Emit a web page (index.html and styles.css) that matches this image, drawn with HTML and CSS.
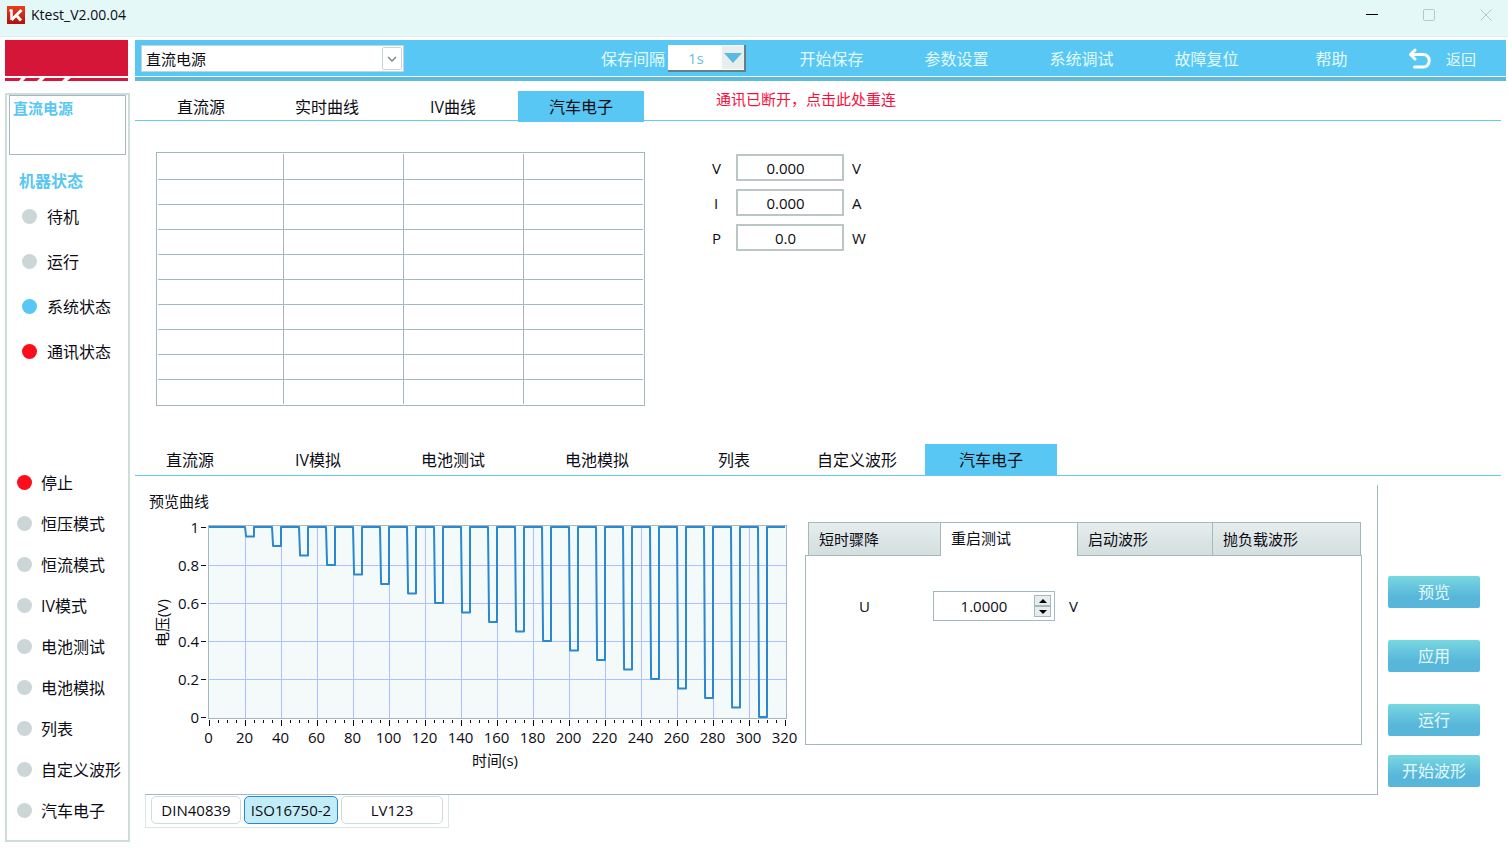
FILE: index.html
```html
<!DOCTYPE html>
<html lang="zh-CN">
<head>
    <meta charset="UTF-8">
    <meta name="viewport" content="width=device-width, initial-scale=1.0">
    <title>Ktest_V2.00.04</title>
    <link rel="stylesheet" href="styles.css">
</head>
<body>

<header class="titlebar">
    <svg class="app-icon" width="18" height="18" viewBox="0 0 18 18">
        <defs>
            <linearGradient id="icon-red" x1="0" y1="0" x2="0" y2="1">
                <stop offset="0" stop-color="#e8401c"/>
                <stop offset="1" stop-color="#b3100c"/>
            </linearGradient>
        </defs>
        <rect width="18" height="18" fill="url(#icon-red)"/>
        <path d="M4.500 3.500v10.500M2.500 4.500h2" fill="none" stroke="#fff" stroke-width="2.500"/>
        <path d="M4.500 14l10-10M9.500 9.500l4.500 5" fill="none" stroke="#fff" stroke-width="3"/>
    </svg>
    <h1>Ktest_V2.00.04</h1>
    <div class="window-buttons">
        <button aria-label="最小化"><svg width="12" height="12"><path d="M0 5.500h12" stroke="#000"/></svg></button>
        <button aria-label="最大化"><svg width="12" height="12"><rect x="0.500" y="0.500" width="11" height="11" rx="1" fill="none" stroke="#b4c8c8"/></svg></button>
        <button aria-label="关闭"><svg width="12" height="12"><path d="M0.500 0.500l11 11M11.500 0.500l-11 11" stroke="#b4c8c8"/></svg></button>
    </div>
</header>

<div class="app">
    <div class="left">
        <div class="logo">
            <svg width="123" height="6" viewBox="0 0 123 6">
                <path d="M14 6l3-4h5l-4 4zM32 6l4-4h5l-4 4zM57 6l4-4h6l-5 4z" fill="#fff"/>
            </svg>
        </div>

        <aside class="sidebar">
            <div class="device">直流电源</div>
            <h2>机器状态</h2>
            <ul class="status">
                <li><i class="dot"></i>待机</li>
                <li><i class="dot"></i>运行</li>
                <li><i class="dot blue"></i>系统状态</li>
                <li><i class="dot red"></i>通讯状态</li>
            </ul>
            <ul class="modes">
                <li><i class="dot red"></i>停止</li>
                <li><i class="dot"></i>恒压模式</li>
                <li><i class="dot"></i>恒流模式</li>
                <li><i class="dot"></i>IV模式</li>
                <li><i class="dot"></i>电池测试</li>
                <li><i class="dot"></i>电池模拟</li>
                <li><i class="dot"></i>列表</li>
                <li><i class="dot"></i>自定义波形</li>
                <li><i class="dot"></i>汽车电子</li>
            </ul>
        </aside>
    </div>

    <main>
        <div class="topbar">
            <div class="device-select">
                <select aria-label="设备">
                    <option>直流电源</option>
                </select>
                <span class="arrow"><svg width="10" height="6" viewBox="0 0 10 6"><path d="M1 1l4 4 4-4" fill="none" stroke="#6f8388" stroke-width="1.300"/></svg></span>
            </div>
            <label class="interval-label" for="interval">保存间隔</label>
            <div class="interval-select">
                <select id="interval">
                    <option>1s</option>
                </select>
                <span class="arrow"><svg width="18" height="10" viewBox="0 0 18 10"><path d="M0 0h18l-9 10z" fill="#58bce0"/></svg></span>
            </div>
            <nav>
                <button>开始保存</button>
                <button>参数设置</button>
                <button>系统调试</button>
                <button>故障复位</button>
                <button>帮助</button>
            </nav>
            <button class="back">
                <svg width="24" height="22" viewBox="0 0 24 22">
                    <path d="M7 2L2.500 6.500 7 11M3 6.500h12.500a5.500 6 0 0 1 0 12.500H6.500" fill="none" stroke="#fff" stroke-width="3" stroke-linecap="round" stroke-linejoin="round"/>
                </svg>
                返回
            </button>
        </div>

        <div class="tabs tabs-view">
            <button>直流源</button>
            <button>实时曲线</button>
            <button>IV曲线</button>
            <button class="active">汽车电子</button>
            <button class="reconnect">通讯已断开，点击此处重连</button>
        </div>

        <section class="measure">
            <div class="table-frame">
                <table id="data-table">
                    <colgroup><col class="first"><col><col><col></colgroup>
                    <tbody></tbody>
                </table>
            </div>
            <div class="readings">
                <label for="read-v">V</label><input id="read-v" value="0.000" readonly><span>V</span>
                <label for="read-i">I</label><input id="read-i" value="0.000" readonly><span>A</span>
                <label for="read-p">P</label><input id="read-p" value="0.0" readonly><span>W</span>
            </div>
        </section>

        <div class="tabs tabs-function">
            <button>直流源</button>
            <button>IV模拟</button>
            <button>电池测试</button>
            <button>电池模拟</button>
            <button>列表</button>
            <button>自定义波形</button>
            <button class="active">汽车电子</button>
        </div>

        <div class="workspace">
            <section class="panel">
                <div class="preview">
                    <h3>预览曲线</h3>
                    <svg id="chart" viewBox="0 0 660 270"></svg>
                </div>

                <div class="wave">
                    <div class="wave-tabs">
                        <button>短时骤降</button>
                        <button class="active">重启测试</button>
                        <button>启动波形</button>
                        <button>抛负载波形</button>
                    </div>
                    <div class="wave-body">
                        <label for="voltage">U</label>
                        <div class="spinner">
                            <input id="voltage" value="1.0000">
                            <div class="steps">
                                <button aria-label="增加"><svg width="8" height="4"><path d="M0 4l4-4 4 4z"/></svg></button>
                                <button aria-label="减少"><svg width="8" height="4"><path d="M0 0l4 4 4-4z"/></svg></button>
                            </div>
                        </div>
                        <span>V</span>
                    </div>
                </div>
            </section>

            <div class="actions">
                <button>预览</button>
                <button>应用</button>
                <button>运行</button>
                <button class="start">开始波形</button>
            </div>
        </div>

        <div class="standards">
            <button>DIN40839</button>
            <button class="active">ISO16750-2</button>
            <button>LV123</button>
        </div>
    </main>
</div>

<script>
    // Empty result table, 10 rows x 4 columns
    const tbody = document.querySelector('#data-table tbody');
    for (let i = 0; i < 10; i++) {
        tbody.insertAdjacentHTML('beforeend', '<tr><td></td><td></td><td></td><td></td></tr>');
    }

    // Plot area inside the chart
    const left = 64, right = 640, top1 = 16, bottom = 206;
    const px = t => left + t * (right - left) / 320;
    const py = v => bottom - v * (bottom - top1);

    function drawChart() {
        let out = `<rect class="plot" x="${left - 0.5}" y="${top1 - 1.5}" width="578" height="193"/>`;

        for (let t = 0; t <= 320; t += 5) {
            const x = Math.round(px(t)) + 0.5;
            const major = t % 20 === 0;
            if (major && t > 0 && t < 320) {
                out += `<path class="grid" d="M${x} ${top1}V${bottom + 1}"/>`;
            }
            out += `<path class="tick" d="M${x} 209v${major ? 6 : 3}"/>`;
            if (major) {
                out += `<text x="${x - 1}" y="232" text-anchor="middle">${t}</text>`;
            }
        }

        for (let i = 0; i <= 5; i++) {
            const y = Math.round(py(i / 5)) + 0.5;
            if (i > 0 && i < 5) {
                out += `<path class="grid" d="M${left} ${y}H${right + 1}"/>`;
            }
            out += `<path class="tick" d="M56 ${y}h5"/>`;
            out += `<text x="54" y="${y + 5}" text-anchor="end">${i / 5}</text>`;
        }

        // 5s drops every 15s, each one 5% deeper than the last
        let d = `M${px(0)} ${py(1)}`;
        for (let k = 1; k <= 20; k++) {
            const t = 20 + (k - 1) * 15;
            const v = 1 - k * 0.05;
            d += `H${px(t)}L${px(t + 0.6)} ${py(v)}H${px(t + 5)}V${py(1)}`;
        }
        d += `H${px(320)}`;
        out += `<path class="curve" d="${d}"/>`;

        out += '<text x="350" y="255" text-anchor="middle">时间(s)</text>';
        out += '<text transform="translate(23 112) rotate(-90)" text-anchor="middle">电压(V)</text>';
        document.getElementById('chart').innerHTML = out;
    }

    drawChart();
</script>

</body>
</html>
```

FILE: styles.css
```css
* {
    box-sizing: border-box;
}
body {
    margin: 0;
    background: #fff;
    color: #0c0c14;
    font-family: "Open Sans", "Noto Sans CJK SC", sans-serif;
    font-size: 16px;
    line-height: 24px;
}
button, input, select {
    margin: 0;
    padding: 0;
    border: 0;
    background: none;
    color: inherit;
    font: inherit;
}
h1, h2, h3, ul {
    margin: 0;
    padding: 0;
    list-style: none;
}
svg {
    display: block;
}

.titlebar {
    display: flex;
    align-items: center;
    height: 37px;
    padding: 0 0 7px 7px;
    background: #e5f8f8;
    border-bottom: 1px solid #e4eeee;
}
.titlebar h1 {
    margin-left: 6px;
    font-size: 14px;
    font-weight: normal;
}
.window-buttons {
    display: flex;
    gap: 13px;
    margin-left: auto;
}
.window-buttons button {
    display: flex;
    justify-content: center;
    align-items: center;
    width: 44px;
    height: 29px;
}

.app {
    display: grid;
    grid-template-columns: 125px minmax(0, 1fr);
    gap: 5px;
    padding: 3px 2px 8px 5px;
}
.logo {
    height: 41px;
    margin-right: 2px;
    padding-top: 35px;
    background: linear-gradient(#d51638 36px, #fff 36px, #fff 38px, #d51638 38px);
}

.sidebar {
    margin-top: 12px;
    padding: 0 2px 9px;
    border: 2px solid #cfdcdc;
}
.device {
    height: 60px;
    padding: 0 3px;
    border: 1px solid #a3b9bf;
    color: #58c7f3;
    font-size: 15px;
    font-weight: bold;
}
.sidebar h2 {
    margin: 14px 0 0 10px;
    color: #58c7f3;
    font-size: 16px;
    line-height: 25px;
}
.sidebar li {
    display: flex;
    align-items: center;
    white-space: nowrap;
}
.status li {
    gap: 10px;
    height: 45px;
    padding-left: 13px;
}
.modes {
    margin-top: 88px;
}
.modes li {
    gap: 9px;
    height: 41px;
    padding-left: 8px;
}
.dot {
    flex: none;
    width: 15px;
    height: 15px;
    border-radius: 50%;
    background: #ccd6d6;
}
.dot.blue {
    background: #58c7f3;
}
.dot.red {
    background: #fb0d1b;
}

.topbar {
    display: flex;
    align-items: center;
    height: 41px;
    padding: 0 0 4px 6px;
    background: linear-gradient(#58c7f3 36px, #fff 36px, #fff 37px, #5bb9dc 37px);
    color: #e2fbff;
}
.device-select, .interval-select {
    position: relative;
}
.topbar select {
    display: block;
    width: 100%;
    appearance: none;
    background: #fff;
}
.device-select select {
    width: 263px;
    height: 27px;
    padding-left: 4px;
    border: 1px solid #c3d3d6;
    color: #0c0c14;
    font-size: 15px;
}
.device-select .arrow, .interval-select .arrow {
    position: absolute;
    display: flex;
    justify-content: center;
    align-items: center;
    pointer-events: none;
}
.device-select .arrow {
    top: 2px;
    right: 2px;
    width: 20px;
    height: 23px;
    border: 1px solid #c9d5d8;
    border-radius: 2px;
}
.interval-label {
    margin-left: auto;
}
.interval-select {
    width: 78px;
    margin-left: 3px;
}
.interval-select select {
    height: 27px;
    padding-left: 20px;
    border-right: 2px solid #66808a;
    border-bottom: 2px solid #66808a;
    color: #6cbfdc;
    font-size: 15px;
}
.interval-select .arrow {
    top: 1px;
    right: 2px;
    width: 22px;
    height: 23px;
    background: #e8eeee;
}
.topbar nav {
    display: flex;
    margin-left: 23px;
}
.topbar nav button {
    width: 125px;
}
.back {
    display: flex;
    align-items: center;
    gap: 14px;
    width: 112px;
    padding-left: 14px;
    font-size: 15px;
}

.tabs {
    display: flex;
    margin-right: 5px;
    border-bottom: 1px solid #62cbee;
}
.tabs .active {
    background: #58c7f3;
}
.tabs-view {
    height: 30px;
    margin-top: 10px;
    padding-left: 3px;
}
.tabs-view button {
    width: 126px;
    height: 31px;
}
.tabs-view .active {
    margin-left: 2px;
}
.tabs-view .reconnect {
    width: auto;
    height: 17px;
    margin-left: 72px;
    color: #fb0d3b;
    font-size: 15px;
    line-height: 17px;
}
.tabs-function {
    display: grid;
    grid-template-columns: 110px 146px 124px 164px 110px 136px 132px;
    height: 32px;
    margin-top: 38px;
}

.measure {
    display: flex;
    padding: 31px 0 0 21px;
}
.table-frame {
    width: 489px;
    padding: 1px;
    border: 1px solid #a3b9bf;
}
#data-table {
    width: 100%;
    border-collapse: collapse;
    table-layout: fixed;
}
#data-table .first {
    width: 125px;
}
#data-table td {
    height: 25px;
    padding: 0;
    border: 1px solid #a3b9bf;
}
#data-table tr:first-child td {
    border-top: 0;
}
#data-table tr:last-child td {
    border-bottom: 0;
}
#data-table td:first-child {
    border-left: 0;
}
#data-table td:last-child {
    border-right: 0;
}
.readings {
    display: grid;
    grid-template-columns: 16px 108px 20px;
    grid-auto-rows: 27px;
    align-content: start;
    align-items: center;
    column-gap: 8px;
    row-gap: 8px;
    margin: 2px 0 0 67px;
    font-size: 15px;
}
.readings label {
    width: 8px;
    text-align: center;
}
.readings input {
    width: 108px;
    height: 27px;
    padding-right: 9px;
    border: 2px solid #bcc6c6;
    text-align: center;
}

.workspace {
    display: grid;
    grid-template-columns: minmax(0, 1fr) 92px;
    gap: 10px;
    margin-top: 9px;
    padding: 0 26px 0 10px;
}
.panel {
    display: grid;
    grid-template-columns: 660fr 557fr;
    height: 310px;
    padding-right: 15px;
    border-right: 1px solid #a3b9bf;
    border-bottom: 1px solid #a3b9bf;
}
.preview {
    padding-top: 6px;
}
.preview h3 {
    padding-left: 4px;
    font-size: 15px;
    font-weight: normal;
    line-height: 20px;
}
#chart {
    width: 100%;
    font-size: 15px;
    fill: #0c0c14;
}
#chart .plot {
    fill: #f4fafa;
    stroke: #a3b9bf;
}
#chart .grid {
    stroke: #b0bfff;
}
#chart .tick {
    stroke: #0c0c14;
}
#chart .curve {
    fill: none;
    stroke: #2a88d0;
    stroke-width: 2;
    stroke-linejoin: round;
}

.wave {
    padding-top: 37px;
}
.wave-tabs {
    display: grid;
    grid-template-columns: 132fr 137fr 135fr 149fr;
    height: 34px;
    padding: 0 1px 0 3px;
}
.wave-tabs button {
    padding-left: 10px;
    border: 1px solid #a3b9bf;
    border-right: 0;
    background: linear-gradient(#e6eded, #d3dede);
    font-size: 15px;
    text-align: left;
}
.wave-tabs button:last-child {
    border-right: 1px solid #a3b9bf;
}
.wave-tabs .active {
    z-index: 1;
    padding-bottom: 4px;
    border-bottom: 0;
    background: #fff;
}
.wave-body {
    display: flex;
    align-items: center;
    height: 190px;
    margin-top: -1px;
    padding: 0 0 88px 53px;
    border: 1px solid #a3b9bf;
    font-size: 15px;
}
.wave-body label {
    width: 74px;
}
.spinner {
    display: flex;
    align-items: center;
    width: 122px;
    height: 30px;
    margin-right: 14px;
    border: 1px solid #a3b9bf;
}
.spinner input {
    width: 100px;
    text-align: center;
}
.steps button {
    display: flex;
    justify-content: center;
    align-items: center;
    width: 17px;
    height: 11px;
    border: 1px solid #a3b9bf;
    background: #e6eded;
}

.actions {
    display: flex;
    flex-direction: column;
    gap: 32px;
    padding-top: 91px;
}
.actions button {
    height: 32px;
    border-radius: 2px;
    background: linear-gradient(#78d8e0, #58b6da 65%);
    color: #e2fbff;
}
.actions .start {
    margin-top: -13px;
}

.standards {
    display: flex;
    gap: 3px;
    width: fit-content;
    margin-left: 10px;
    padding: 1px 5px 3px;
    border: 1px solid #dde6e6;
    border-top: 0;
}
.standards button {
    width: 102px;
    height: 28px;
    border: 1px solid #cfdcdc;
    border-radius: 5px;
    font-size: 15px;
}
.standards button:first-child {
    width: 90px;
}
.standards .active {
    width: 94px;
    border-color: #2a88d0;
    background: #c2ecf8;
}
```
